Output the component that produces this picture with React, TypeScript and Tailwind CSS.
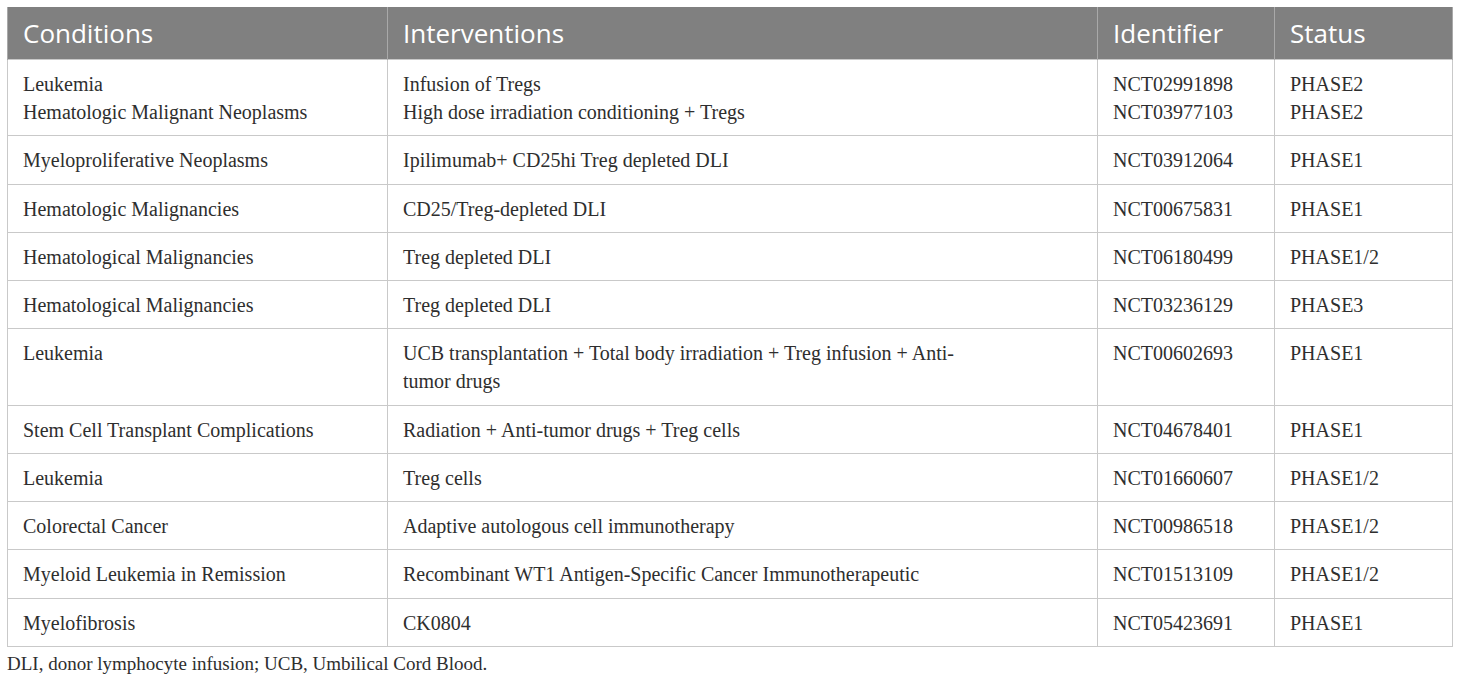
import React from "react";

const rows: [string[], string[], string[], string[]][] = [
  [["Leukemia", "Hematologic Malignant Neoplasms"], ["Infusion of Tregs", "High dose irradiation conditioning + Tregs"], ["NCT02991898", "NCT03977103"], ["PHASE2", "PHASE2"]],
  [["Myeloproliferative Neoplasms"], ["Ipilimumab+ CD25hi Treg depleted DLI"], ["NCT03912064"], ["PHASE1"]],
  [["Hematologic Malignancies"], ["CD25/Treg-depleted DLI"], ["NCT00675831"], ["PHASE1"]],
  [["Hematological Malignancies"], ["Treg depleted DLI"], ["NCT06180499"], ["PHASE1/2"]],
  [["Hematological Malignancies"], ["Treg depleted DLI"], ["NCT03236129"], ["PHASE3"]],
  [["Leukemia"], ["UCB transplantation + Total body irradiation + Treg infusion + Anti-", "tumor drugs"], ["NCT00602693"], ["PHASE1"]],
  [["Stem Cell Transplant Complications"], ["Radiation + Anti-tumor drugs + Treg cells"], ["NCT04678401"], ["PHASE1"]],
  [["Leukemia"], ["Treg cells"], ["NCT01660607"], ["PHASE1/2"]],
  [["Colorectal Cancer"], ["Adaptive autologous cell immunotherapy"], ["NCT00986518"], ["PHASE1/2"]],
  [["Myeloid Leukemia in Remission"], ["Recombinant WT1 Antigen-Specific Cancer Immunotherapeutic"], ["NCT01513109"], ["PHASE1/2"]],
  [["Myelofibrosis"], ["CK0804"], ["NCT05423691"], ["PHASE1"]],
];

const headers = ["Conditions", "Interventions", "Identifier", "Status"];
const widths = ["w-[380px]", "w-[710px]", "w-[177px]", "w-[178px]"];

export default function App() {
  return (
    <div className="w-[1460px] h-[683px] bg-white pt-[7px] pl-[7px]">
      <table className="border-collapse table-fixed w-[1445px]">
        <colgroup>
          {widths.map((w, i) => (
            <col key={i} className={w} />
          ))}
        </colgroup>
        <thead>
          <tr className="bg-[#808080]">
            {headers.map((h, i) => (
              <th
                key={i}
                className="text-left font-normal text-white text-[26px] leading-[32px] px-[15px] pt-[10px] pb-[10px] align-middle border-l border-r border-[#a9a9a9]"
                style={{ fontFamily: '"Open Sans", sans-serif' }}
              >
                {h}
              </th>
            ))}
          </tr>
        </thead>
        <tbody>
          {rows.map((r, ri) => (
            <tr key={ri}>
              {r.map((cell, ci) => (
                <td
                  key={ci}
                  className="border border-[#c9c9c9] px-[15px] pt-[10px] pb-[9.25px] align-top text-[20px] leading-[28px] text-[#2e2e2e]"
                  style={{ fontFamily: '"Liberation Serif", serif' }}
                >
                  {cell.map((line, li) => (
                    <div key={li} className="whitespace-nowrap">{line}</div>
                  ))}
                </td>
              ))}
            </tr>
          ))}
        </tbody>
      </table>
      <div
        className="mt-[5px] text-[19px] leading-[24px] text-[#2e2e2e]"
        style={{ fontFamily: '"Liberation Serif", serif' }}
      >
        DLI, donor lymphocyte infusion; UCB, Umbilical Cord Blood.
      </div>
    </div>
  );
}
